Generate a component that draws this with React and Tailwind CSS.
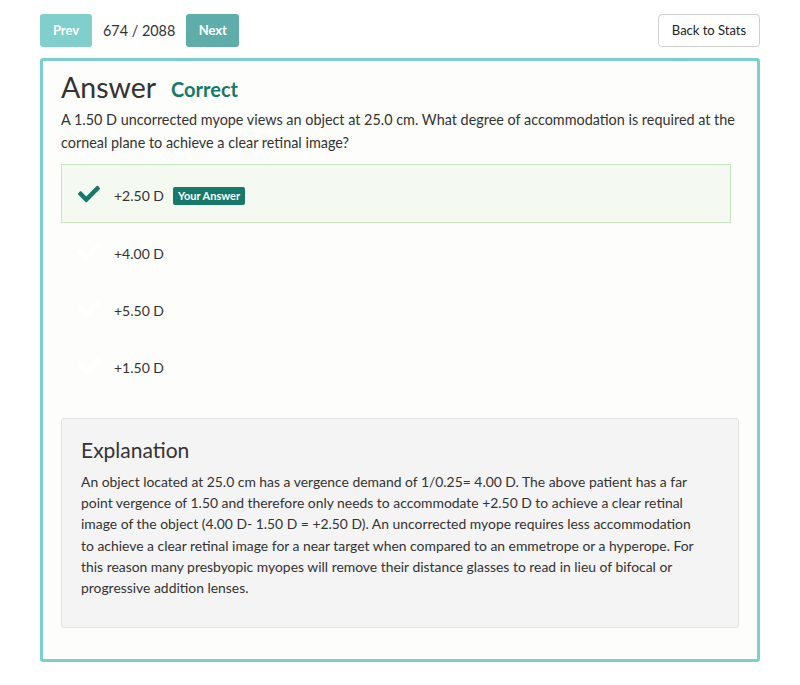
import React from 'react';
import { FaCheck } from 'react-icons/fa';

const answers = [
    { id: 1, text: '+2.50 D', selected: true },
    { id: 2, text: '+4.00 D' },
    { id: 3, text: '+5.50 D' },
    { id: 4, text: '+1.50 D' },
];

// Líneas tal como aparecen en la explicación
const explanation = [
    'An object located at 25.0 cm has a vergence demand of 1/0.25= 4.00 D. The above patient has a far',
    'point vergence of 1.50 and therefore only needs to accommodate +2.50 D to achieve a clear retinal',
    'image of the object (4.00 D- 1.50 D = +2.50 D). An uncorrected myope requires less accommodation',
    'to achieve a clear retinal image for a near target when compared to an emmetrope or a hyperope. For',
    'this reason many presbyopic myopes will remove their distance glasses to read in lieu of bifocal or',
    'progressive addition lenses.',
];

export default function App() {
    return (
        <div className="min-h-[685px] bg-white px-10 pt-[14px] font-['Lato',sans-serif] text-[#333]">
            {/* Navegación */}
            <div className="flex items-center justify-between">
                <div className="flex items-center">
                    <button className="h-[33px] w-[52px] rounded-[3px] bg-[#80cfcc] text-[13px] font-bold text-white">Prev</button>
                    <span className="ml-[11px] mr-[11px] text-[14.4px] text-[#333]">674 / 2088</span>
                    <button className="h-[33px] w-[53px] rounded-[3px] bg-[#5fadaa] text-[13px] font-bold text-white">Next</button>
                </div>
                <button className="h-[33px] w-[102px] rounded-[4px] border border-[#cfcfcf] bg-white text-[13px] text-[#222]">Back to Stats</button>
            </div>

            {/* Tarjeta */}
            <div className="mt-[11px] rounded-[3px] border-[3px] border-[#7ccfcc] bg-[#fdfdfb] px-[18px] pb-[31px] pt-[8px]">
                <div className="flex items-end">
                    <h1 className="text-[28.5px] leading-[36px] text-[#333]">Answer</h1>
                    <span className="mb-[1px] ml-[15px] text-[20px] font-bold text-[#17796a]">Correct</span>
                </div>
                <p className="mt-[3px] text-[14.4px] leading-[23px] text-[#333]">
                    A 1.50 D uncorrected myope views an object at 25.0 cm. What degree of accommodation is required at the corneal plane to achieve a clear retinal image?
                </p>

                <div className="mt-[10px] w-[670px]">
                    {answers.map((a) => (
                        <div
                            key={a.id}
                            className={`flex items-center border pl-[16px] pt-[4px] ${a.selected ? 'h-[59px] border-[#c6e5c0] bg-[#f4f9f2]' : 'h-[57px] border-transparent'}`}
                        >
                            <div className="w-[36px] -translate-y-[2px]">
                                <FaCheck size={22} className={a.selected ? 'text-[#17796a]' : 'text-white'} />
                            </div>
                            <span className="text-[14px] text-[#333]">{a.text}</span>
                            {a.selected && (
                                <span className="ml-[9px] rounded-[2px] bg-[#17796a] px-[5px] py-[2px] text-[11px] font-bold leading-[14px] text-white">Your Answer</span>
                            )}
                        </div>
                    ))}
                </div>

                {/* Explicación */}
                <div className="mt-[24px] rounded-[3px] border border-[#e3e3e3] bg-[#f4f4f4] px-[19px] pb-[29px] pt-[17px]">
                    <h2 className="text-[21px] leading-[28px] text-[#333]">Explanation</h2>
                    <div className="mt-[7px] text-[13.9px] leading-[21.2px] text-[#333]">
                        {explanation.map((line, i) => (
                            <div key={i} className="whitespace-nowrap">{line}</div>
                        ))}
                    </div>
                </div>
            </div>
        </div>
    );
}
